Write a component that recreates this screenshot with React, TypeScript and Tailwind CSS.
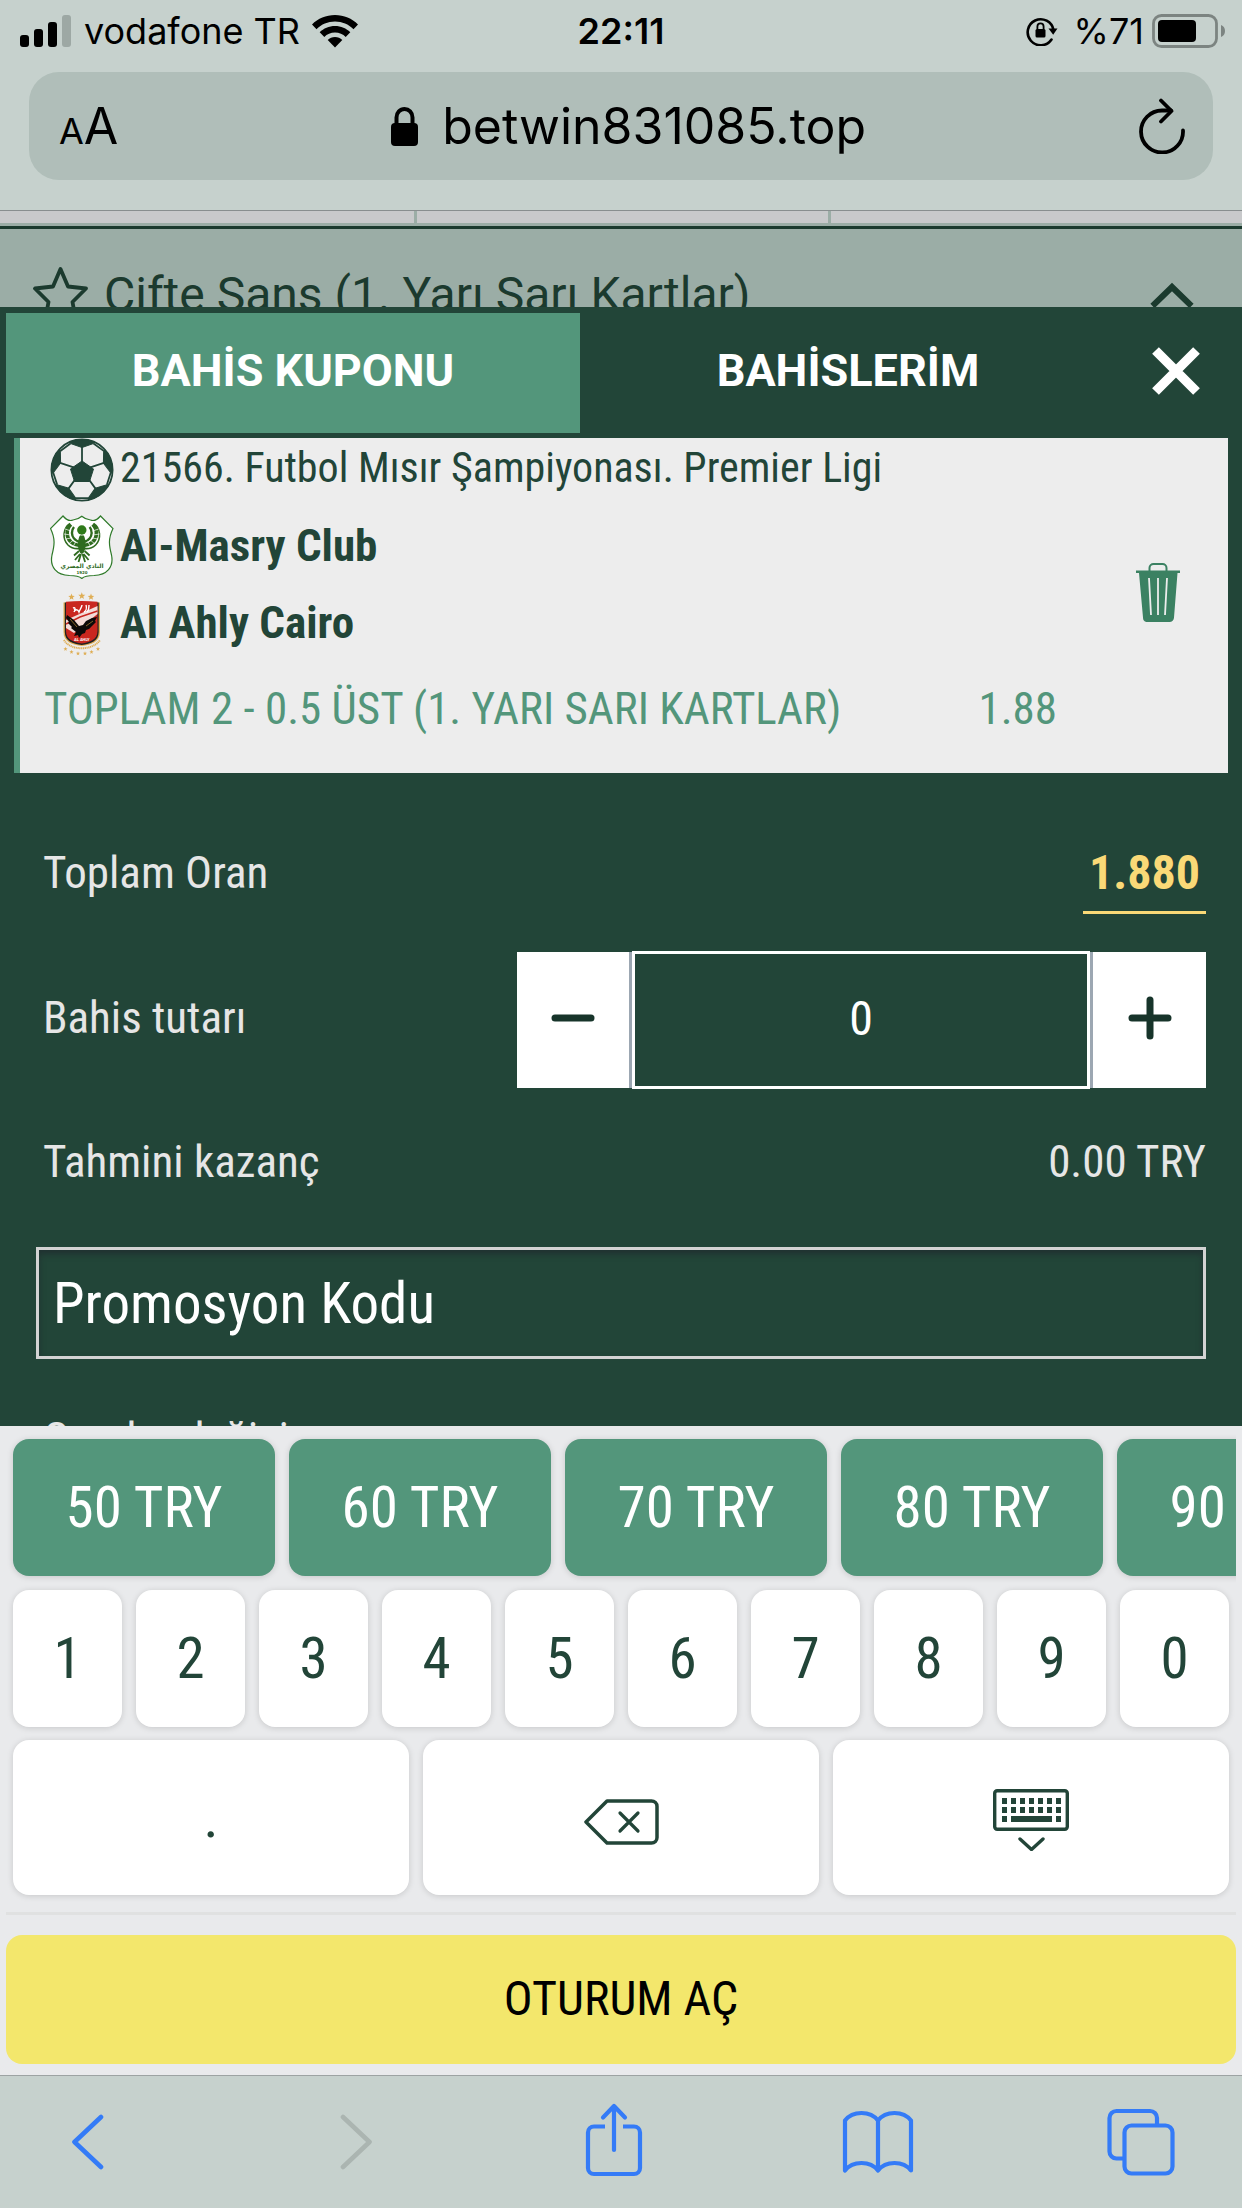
import { useState } from "react"

const chips = [50, 60, 70, 80, 90]
const digits = ["1", "2", "3", "4", "5", "6", "7", "8", "9", "0"]
const fifths = [0, 72, 144, 216, 288]

function starPoints(cx: number, cy: number, r: number) {
  return Array.from({ length: 10 }, (_, i) => {
    const radius = i % 2 === 0 ? r : r * 0.42
    const a = (Math.PI / 5) * i - Math.PI / 2
    return `${(cx + radius * Math.cos(a)).toFixed(2)},${(cy + radius * Math.sin(a)).toFixed(2)}`
  }).join(" ")
}

/* ---------- drawings ---------- */

function SignalIcon() {
  return (
    <svg width="52" height="32" viewBox="0 0 52 32" aria-hidden="true">
      <rect x="0" y="20" width="9" height="12" rx="3" />
      <rect x="14" y="14" width="9" height="18" rx="3" />
      <rect x="28" y="7" width="9" height="25" rx="3" />
      <rect x="42" y="0" width="9" height="32" rx="3" fill="#9da8a4" />
    </svg>
  )
}

function WifiIcon() {
  return (
    <svg width="46" height="33" viewBox="0 0 46 33" aria-hidden="true">
      <path d="M23 0C14 0 6 3.500 0 9.500L4.500 14.200C9.400 9.400 15.900 6.600 23 6.600s13.600 2.800 18.500 7.600L46 9.500C40 3.500 32 0 23 0Z" />
      <path d="M23 11c-6 0-11.400 2.400-15.300 6.200l4.600 4.700C15 19.200 18.800 17.600 23 17.600s8 1.600 10.700 4.300l4.600-4.700C34.400 13.400 29 11 23 11Z" />
      <path d="M23 22c-2.800 0-5.400 1.100-7.300 2.900L23 32.600l7.300-7.700C28.400 23.100 25.800 22 23 22Z" />
    </svg>
  )
}

function RotationLockIcon() {
  return (
    <svg width="32" height="30" viewBox="0 0 32 30" aria-hidden="true">
      <path d="M25.500 23.500A13 13 0 1 1 27.500 14" fill="none" stroke="#000" strokeWidth="2.600" strokeLinecap="round" />
      <path d="M22.500 12.500h9l-4.300 6.200z" />
      <rect x="9.500" y="13" width="10" height="8.500" rx="1.500" />
      <path d="M11.400 13.500v-3a3.100 3.100 0 0 1 6.200 0v3" fill="none" stroke="#000" strokeWidth="1.800" />
    </svg>
  )
}

function BatteryIcon() {
  return (
    <svg width="74" height="34" viewBox="0 0 74 34" aria-hidden="true">
      <rect x="1.500" y="1.500" width="63" height="31" rx="8" fill="none" stroke="#7c8481" strokeWidth="2.800" />
      <rect x="6" y="6" width="38" height="22" rx="4" />
      <path d="M69 11c2.600.8 4 3.200 4 6s-1.400 5.200-4 6z" fill="#7c8481" />
    </svg>
  )
}

function PadlockIcon() {
  return (
    <svg width="27" height="39" viewBox="0 0 27 39" aria-hidden="true">
      <rect x="0" y="16" width="27" height="23" rx="4" />
      <path d="M5.500 18V10.500a8 8.500 0 0 1 16 0V18" fill="none" stroke="#000" strokeWidth="4" />
    </svg>
  )
}

function ReloadIcon() {
  return (
    <svg width="46" height="56" viewBox="0 0 46 56" fill="none" stroke="#000" strokeWidth="3.800" strokeLinecap="round" strokeLinejoin="round" aria-hidden="true">
      <path d="M44 32.500A21 21 0 1 1 23 12.500h9" />
      <path d="M22 2.500l10.500 10.500L22 23.500" />
    </svg>
  )
}

function FootballIcon() {
  return (
    <svg width="64" height="64" viewBox="-32 -32 64 64" aria-hidden="true">
      <clipPath id="ball">
        <circle r="31" />
      </clipPath>
      <circle r="31" fill="#ededed" />
      <g clipPath="url(#ball)" fill="#224538" stroke="#224538">
        {fifths.map((deg) => (
          <g key={deg} transform={`rotate(${deg})`}>
            <path d="M0-22.500L-11.500-26.500-17-36H17L11.500-26.500Z" strokeWidth="1" />
            <path d="M0-8V-23M-11.500-26.500L-21.600-19.100" fill="none" strokeWidth="1.800" />
          </g>
        ))}
        <path d="M0-9L11.500-1 7.500 11.500H-7.500L-11.500-1Z" />
      </g>
      <circle r="30.600" fill="none" stroke="#224538" strokeWidth="1.800" />
    </svg>
  )
}

function AlMasryCrest() {
  const wing = (
    <g fill="none" stroke="#2f6b1f">
      <path d="M20 8.500C13 13 12 24 18 30c3.500 3.500 8 4 12 3.500" strokeWidth="1.600" />
      <path d="M21 9.500C16 14 16 22 20.500 26.500c2.500 2.500 6 3.500 9.500 4" strokeWidth="3.600" />
      <path d="M24 12c-3 3.500-2.500 8.500 0 11.500 1.500 2 3.500 3 6 3.500" strokeWidth="2.400" />
      <path d="M15 14l6 2M14 19l7 1M15.500 24l6-1M18.500 29l5-4M23 32l3-6" stroke="#fff" strokeWidth=".7" />
      <path d="M29 36l-5 4.500M30 39l-5 6M31 39l-2.500 8" strokeWidth="1.800" />
    </g>
  )
  return (
    <svg width="64" height="64" viewBox="0 0 64 64" role="img" aria-label="Al-Masry">
      <path
        d="M13 1Q18 7 23 5 28 4.500 31.800 1.200 35.500 4.500 40.500 5 45.500 7 50.500 1L63 13.500C58 24 59 30 61.500 40 64 52 57 60 44 60.500 38 60.500 34 61.500 31.800 63.500 29.500 61.500 25.500 60.500 19.500 60.500 6.500 60-.500 52 2 40 4.500 30 5.500 24 .500 13.500Z"
        fill="#fff"
        stroke="#2f7a2a"
        strokeWidth="1.200"
      />
      {wing}
      <g transform="matrix(-1 0 0 1 63.600 0)">{wing}</g>
      <ellipse cx="31.800" cy="29" rx="3.800" ry="10" fill="#2f6b1f" />
      <circle cx="31.800" cy="15" r="5.600" fill="#fff" />
      <circle cx="31.800" cy="15" r="4.700" fill="#2f7a1a" />
      <text x="32" y="53" fontSize="6" textAnchor="middle" fontWeight="700" fill="#2f6b1f" className="font-['DejaVu_Sans',sans-serif]">النادي المصري</text>
      <text x="32" y="59" fontSize="4" textAnchor="middle" fill="#2f6b1f" className="font-['DejaVu_Sans',sans-serif]">1920</text>
    </svg>
  )
}

function AlAhlyCrest() {
  return (
    <svg width="64" height="64" viewBox="0 0 64 64" role="img" aria-label="Al Ahly">
      <g fill="#dfae55">
        <polygon points={starPoints(21.500, 5, 3.400)} />
        <polygon points={starPoints(31.800, 4, 3.700)} />
        <polygon points={starPoints(41, 5, 3.400)} />
        <polygon points={starPoints(15.500, 57, 2.200)} />
        <polygon points={starPoints(21.500, 60, 2.200)} />
        <polygon points={starPoints(28, 61.500, 2.200)} />
        <polygon points={starPoints(35, 61.500, 2.200)} />
        <polygon points={starPoints(41.500, 60, 2.200)} />
        <polygon points={starPoints(48, 57, 2.200)} />
      </g>
      <path d="M14 48C20 59 43 59 50 48" fill="none" stroke="#dfae55" strokeWidth="2" strokeDasharray="1.200 .6" />
      <path d="M13.500 10.500H50V40c0 10-9 13-18.200 14C22.500 53 13.500 50 13.500 40Z" fill="#dfae55" />
      <path d="M14.800 10.500H48.700V40c0 9-8 12-16.900 13-9-1-17-4-17-13Z" fill="#222" />
      <path d="M16 9.800Q32 8 47.500 9.800V39c0 8.500-7.500 11.500-15.700 12.500C23.500 50.500 16 47.500 16 39Z" fill="#c9271f" />
      <path d="M16 28L47.500 14V22L24 41 16 36Z" fill="#f3dcd8" />
      <path d="M16 32L30 25 47.500 19" stroke="#c9271f" strokeWidth="1.500" fill="none" />
      <path d="M24 20c1-3 4-3 5 0 1-3 3-5 3-7m2 7c2-1 3-4 2-7m3 0c0 3 0 5-2 7m-14-4c2-1 3 1 1 2" fill="none" stroke="#fff" strokeWidth="1.400" />
      <path
        d="M17 23l7 5 5 6 4-1 3-4 6-3 5-1-2 4 1 1-4 4-3 3-3 1-1 3-3 1-3 4-1-3-4 1 2-4-5-4 1-1-4-4 1-1-3-4Z"
        fill="#0c0a09"
      />
      <path d="M20 27l7 8M43 29l-7 5" stroke="#b98c3a" strokeWidth=".7" />
      <text x="31.800" y="49" fontSize="4" textAnchor="middle" fontWeight="700" fill="#fff" className="font-[Roboto,sans-serif]">AL AHLY</text>
    </svg>
  )
}

function TrashIcon() {
  return (
    <svg width="44" height="59" viewBox="0 0 44 59" aria-hidden="true">
      <path d="M13.500 9V5a4 4 0 0 1 4-4h9a4 4 0 0 1 4 4v4" fill="none" stroke="#3b8162" strokeWidth="2" />
      <path d="M0 7.500h44V10h-2.500L38 54.500a4.500 4.500 0 0 1-4.500 4.500h-23A4.500 4.500 0 0 1 7 54.500L3 10H0Z" fill="#3b8162" />
      <path d="M13 15l2 37M22 15v37M31 15l-2 37" stroke="#ededed" strokeWidth="1.800" />
    </svg>
  )
}

function BackspaceIcon() {
  return (
    <svg width="75" height="46" viewBox="0 0 75 46" fill="none" stroke="#224538" strokeLinecap="round" strokeLinejoin="round" aria-hidden="true">
      <path d="M23 2H67.500a5.500 5.500 0 0 1 5.500 5.500v31A5.500 5.500 0 0 1 67.500 44H23L2 23Z" strokeWidth="3.500" />
      <path d="M36 14l18 18M54 14L36 32" strokeWidth="3.200" />
    </svg>
  )
}

function HideKeyboardIcon() {
  const cols = [9, 18, 27, 36, 45, 54, 63]
  return (
    <svg width="76" height="62" viewBox="0 0 76 62" fill="#224538" aria-hidden="true">
      <rect x="1.700" y="1.700" width="72.600" height="38.600" rx="2.500" fill="none" stroke="#224538" strokeWidth="3.400" />
      {cols.map((x) => (
        <g key={x}>
          <rect x={x} y="9" width="5" height="6" />
          <rect x={x} y="18" width="5" height="6" />
        </g>
      ))}
      <rect x="9" y="27" width="5" height="6" />
      <rect x="18" y="27" width="41" height="6" />
      <rect x="63" y="27" width="5" height="6" />
      <path d="M27 50l11.500 10.500L50 50" fill="none" stroke="#224538" strokeWidth="3.400" strokeLinecap="round" strokeLinejoin="round" />
    </svg>
  )
}

/* ---------- sections ---------- */

function StatusBar() {
  return (
    <div className="grid grid-cols-3 items-center px-5 pt-[13px] text-[36px] leading-9">
      <div className="flex items-center gap-3">
        <SignalIcon />
        <span>vodafone TR</span>
        <WifiIcon />
      </div>
      <div className="text-center font-semibold">22:11</div>
      <div className="-mr-1 flex items-center justify-end gap-2">
        <RotationLockIcon />
        <span className="pl-2">%71</span>
        <BatteryIcon />
      </div>
    </div>
  )
}

function AddressBar() {
  return (
    <div className="mx-[29px] mt-[23px] flex h-[108px] items-center justify-between rounded-[30px] bg-[#b0beb9] pr-7 pl-[30px]">
      <button type="button" aria-label="Metin boyutu" className="flex items-baseline pt-1">
        <span className="text-[36px] leading-[52px]">A</span>
        <span className="text-[50px] leading-[52px]">A</span>
      </button>
      <div className="flex items-center gap-6">
        <PadlockIcon />
        <span className="text-[50px] leading-[60px]">betwin831085.top</span>
      </div>
      <button type="button" aria-label="Yenile">
        <ReloadIcon />
      </button>
    </div>
  )
}

function MarketHeader() {
  return (
    <div>
      <div className="grid h-3 grid-cols-3 bg-[#c8c9cb]">
        <span />
        <span className="border-l-3 border-[#9bada6]" />
        <span className="border-l-3 border-[#9bada6]" />
      </div>
      <div className="h-[84px] overflow-hidden border-t-3 border-[#9bada6] bg-[#9bada6] text-[#1b3a2e]">
        <div className="flex items-center gap-4 border-t-3 border-[#1b3a2e] px-8 pt-9">
          <svg width="56" height="60" viewBox="0 0 56 60" fill="none" stroke="#1b3a2e" strokeWidth="3.800" strokeLinejoin="round" aria-hidden="true">
            <polygon points="28.500,4 36,21.500 54,23.500 40.500,37 44,56 28.500,46 13,56 16.500,37 3,23.500 21,21.500" />
          </svg>
          <span className="flex-1 font-[Roboto,sans-serif] text-[48px] leading-[60px]">Çifte Şans (1. Yarı Sarı Kartlar)</span>
          <svg width="44" height="26" viewBox="0 0 44 26" fill="none" stroke="#1b3a2e" strokeWidth="6" className="mr-4" aria-hidden="true">
            <path d="M2.500 24L22 5l19.500 19" />
          </svg>
        </div>
      </div>
    </div>
  )
}

function SlipTabs() {
  return (
    <div className="flex bg-[#224538] p-1.5 pb-[5px] font-[Roboto,sans-serif] text-[45px] font-bold text-white">
      <button type="button" className="h-[120px] flex-[574] bg-[#53967b] pb-1">BAHİS KUPONU</button>
      <button type="button" className="h-[120px] flex-[536] pb-1">BAHİSLERİM</button>
      <button type="button" aria-label="Kapat" className="flex w-[120px] items-center justify-center pb-1">
        <svg width="48" height="48" viewBox="0 0 48 48" stroke="#fff" strokeWidth="9.500" aria-hidden="true">
          <path d="M3.500 3.500l41 41M44.500 3.500l-41 41" />
        </svg>
      </button>
    </div>
  )
}

function BetCard() {
  return (
    <div className="mx-3.5 flex h-[335px] border-l-[6px] border-[#53967b] bg-[#ededed] pl-6 text-[#224538]">
      <div className="flex-1 text-[45px]">
        <div className="flex h-[77px] items-start gap-1.5 pl-1.5">
          <FootballIcon />
          <span className="text-[42px] leading-[60px]">21566. Futbol Mısır Şampiyonası. Premier Ligi</span>
        </div>
        <div className="flex h-[77px] items-start gap-1.5 pl-1.5 font-bold">
          <AlMasryCrest />
          <span className="leading-[62px]">Al-Masry Club</span>
        </div>
        <div className="flex h-[77px] items-start gap-1.5 pl-1.5 font-bold">
          <AlAhlyCrest />
          <span className="leading-[62px]">Al Ahly Cairo</span>
        </div>
        <div className="flex justify-between pt-2.5 leading-[60px] text-[#53967b]">
          <span>TOPLAM 2 - 0.5 ÜST (1. YARI SARI KARTLAR)</span>
          <span>1.88</span>
        </div>
      </div>
      <div className="flex w-[171px] justify-end pr-12">
        <button type="button" aria-label="Sil" className="mt-[125px] self-start">
          <TrashIcon />
        </button>
      </div>
    </div>
  )
}

function BetSummary() {
  const [stake, setStake] = useState("0")
  const step = (by: number) => setStake(String(Math.max(0, Number(stake) + by)))
  return (
    <div className="flex flex-col pr-9 pl-[43px] text-[45px] leading-[60px] text-[#e6e6e6]">
      <div className="mt-[66px] flex items-start justify-between">
        <span className="pt-1">Toplam Oran</span>
        <span className="border-b-3 border-[#fad977] px-1.5 pt-1 pb-2 text-[48px] font-bold text-[#fad977]">1.880</span>
      </div>
      <div className="mt-[37px] flex items-center justify-between">
        <label htmlFor="stake" className="pb-1">Bahis tutarı</label>
        <div className="flex h-[138px] w-[689px] items-center">
          <button type="button" aria-label="Azalt" onClick={() => step(-1)} className="flex h-[136px] w-[115px] items-center justify-center border-r-3 border-[#9ca7b2] bg-white pb-1">
            <svg width="44" height="44" viewBox="0 0 44 44" stroke="#17342a" strokeWidth="7" strokeLinecap="round" aria-hidden="true">
              <path d="M4 22h36" />
            </svg>
          </button>
          <input id="stake" value={stake} onChange={(e) => setStake(e.target.value)} className="h-[138px] min-w-0 flex-1 border-3 border-white bg-transparent pb-1 text-center text-[48px] text-white" />
          <button type="button" aria-label="Artır" onClick={() => step(1)} className="flex h-[136px] w-[116px] items-center justify-center border-l-3 border-[#9ca7b2] bg-white pb-1">
            <svg width="44" height="44" viewBox="0 0 44 44" stroke="#17342a" strokeWidth="7" strokeLinecap="round" aria-hidden="true">
              <path d="M4 22h36M22 4v36" />
            </svg>
          </button>
        </div>
      </div>
      <div className="mt-[43px] flex justify-between">
        <span>Tahmini kazanç</span>
        <span>0.00 TRY</span>
      </div>
      <input
        type="text"
        aria-label="Promosyon Kodu"
        placeholder="Promosyon Kodu"
        className="mt-[55px] -ml-[7px] h-[112px] border-3 border-[#d3d3d3] px-3.5 text-[57px] text-white shadow-[inset_0_4px_6px_rgba(32,40,45,0.7)] placeholder:text-white"
      />
      <span className="mt-[50px]">Oranlar değişince</span>
    </div>
  )
}

function Keypad() {
  return (
    <div className="bg-[#e9eaec] px-1.5 text-[57px] text-[#224538]">
      <div className="flex gap-3.5 overflow-hidden pt-[13px] pb-3.5 pl-[7px]">
        {chips.map((amount) => (
          <button key={amount} type="button" className="h-[137px] w-[262px] shrink-0 rounded-2xl bg-[#53967b] text-white shadow-[0_1px_6px_rgba(0,0,0,0.15)]">
            {amount} TRY
          </button>
        ))}
      </div>
      <div className="grid grid-cols-10 gap-3.5 px-[7px]">
        {digits.map((d) => (
          <button key={d} type="button" className="h-[137px] rounded-2xl bg-white shadow-[0_1px_6px_rgba(0,0,0,0.15)]">
            {d}
          </button>
        ))}
      </div>
      <div className="grid grid-cols-3 gap-3.5 px-[7px] pt-[13px]">
        <button type="button" className="h-[155px] rounded-2xl bg-white shadow-[0_1px_6px_rgba(0,0,0,0.15)]">.</button>
        <button type="button" aria-label="Geri sil" className="flex h-[155px] items-center justify-center rounded-2xl bg-white pt-2 shadow-[0_1px_6px_rgba(0,0,0,0.15)]">
          <BackspaceIcon />
        </button>
        <button type="button" aria-label="Klavyeyi gizle" className="flex h-[155px] items-center justify-center rounded-2xl bg-white pt-1 shadow-[0_1px_6px_rgba(0,0,0,0.15)]">
          <HideKeyboardIcon />
        </button>
      </div>
      <div className="mt-[17px] border-t-3 border-[#e0e1e1] pt-5 pb-[11px]">
        <button type="button" className="h-[129px] w-full rounded-2xl bg-[#f3e76c] pb-0.5 text-[48px] text-black">OTURUM AÇ</button>
      </div>
    </div>
  )
}

function BrowserToolbar() {
  return (
    <nav className="flex h-[133px] items-center justify-between border-t border-[#9da3a3] bg-[#c6d1cd] pr-[65px] pl-[51px]">
      <button type="button" aria-label="Geri" className="flex w-[72px] justify-center">
        <svg width="33" height="56" viewBox="0 0 33 56" fill="none" stroke="#347bf7" strokeWidth="4.600" strokeLinecap="round" strokeLinejoin="round">
          <path d="M30 3L3.500 28 30 53" />
        </svg>
      </button>
      <button type="button" aria-label="İleri" disabled className="flex w-[72px] justify-center pl-3">
        <svg width="33" height="56" viewBox="0 0 33 56" fill="none" stroke="#abb5b1" strokeWidth="4.600" strokeLinecap="round" strokeLinejoin="round">
          <path d="M3 3l26.500 25L3 53" />
        </svg>
      </button>
      <button type="button" aria-label="Paylaş" className="flex w-[72px] justify-center pb-1">
        <svg width="58" height="74" viewBox="0 0 58 74" fill="none" stroke="#347bf7" strokeWidth="4.200" strokeLinejoin="round">
          <path d="M20 23.500H9a6 6 0 0 0-6 6V65a6 6 0 0 0 6 6h40a6 6 0 0 0 6-6V29.500a6 6 0 0 0-6-6H38" />
          <path d="M29 47V4M18 14.500L29 3l11 11.500" strokeLinecap="round" />
        </svg>
      </button>
      <button type="button" aria-label="Yer imleri" className="flex w-[72px] justify-center">
        <svg width="72" height="64" viewBox="0 0 72 64" fill="none" stroke="#347bf7" strokeWidth="4.200" strokeLinejoin="round">
          <path d="M36 60.500C31 54 25 53 19.500 53S8 54 3 60.500V10.500C8 4 14 3 19.500 3S31 4 36 10.500C41 4 47 3 52.500 3S64 4 69 10.500V60.500C64 54 58 53 52.500 53S41 54 36 60.500ZM36 10.500V60.500" />
        </svg>
      </button>
      <button type="button" aria-label="Sekmeler" className="flex w-[72px] justify-center">
        <svg width="68" height="68" viewBox="0 0 68 68" fill="none" stroke="#347bf7" strokeWidth="4.200">
          <path d="M16 50.500H9.500a7 7 0 0 1-7-7V10a7 7 0 0 1 7-7H43a7 7 0 0 1 7 7v6" />
          <rect x="17.500" y="17.500" width="48" height="48" rx="7" />
        </svg>
      </button>
    </nav>
  )
}

export default function App() {
  return (
    <div className="flex h-screen flex-col overflow-hidden bg-[#224538] font-['Roboto_Condensed',Roboto,sans-serif]">
      <header className="h-[211px] border-b border-[#888e8f] bg-[#c6d1cd] font-[Inter,sans-serif] text-black">
        <StatusBar />
        <AddressBar />
      </header>
      <MarketHeader />
      <SlipTabs />
      <main className="min-h-0 flex-1 overflow-hidden">
        <BetCard />
        <BetSummary />
      </main>
      <Keypad />
      <BrowserToolbar />
    </div>
  )
}
